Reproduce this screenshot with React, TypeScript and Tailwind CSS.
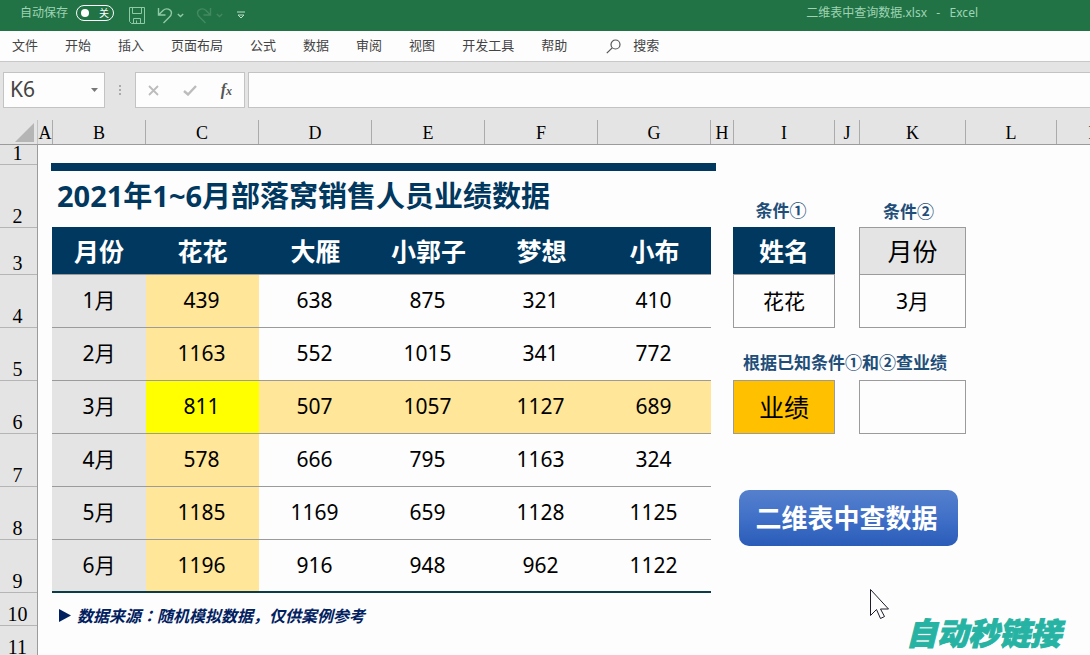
import clsx from 'clsx';

const TABS = ['文件', '开始', '插入', '页面布局', '公式', '数据', '审阅', '视图', '开发工具', '帮助'];

const COLUMNS = [
  { name: 'A', width: 'w-[15px]' },
  { name: 'B', width: 'w-[93px]' },
  { name: 'C', width: 'w-[113px]' },
  { name: 'D', width: 'w-[113px]' },
  { name: 'E', width: 'w-[113px]' },
  { name: 'F', width: 'w-[113px]' },
  { name: 'G', width: 'w-[113px]' },
  { name: 'H', width: 'w-[23px]' },
  { name: 'I', width: 'w-[101px]' },
  { name: 'J', width: 'w-[25px]' },
  { name: 'K', width: 'w-[106px]' },
  { name: 'L', width: 'w-[91px]' },
  { name: 'M', width: 'w-[80px]' },
];

const ROWS = [
  { name: '1', height: 'h-[20px]' },
  { name: '2', height: 'h-[63px]' },
  { name: '3', height: 'h-[47px]' },
  { name: '4', height: 'h-[53px]' },
  { name: '5', height: 'h-[53px]' },
  { name: '6', height: 'h-[53px]' },
  { name: '7', height: 'h-[53px]' },
  { name: '8', height: 'h-[53px]' },
  { name: '9', height: 'h-[53px]' },
  { name: '10', height: 'h-[33px]' },
  { name: '11', height: 'h-[33px]' },
];

const PEOPLE = ['花花', '大雁', '小郭子', '梦想', '小布'];

const SALES = [
  { month: '1月', values: [439, 638, 875, 321, 410] },
  { month: '2月', values: [1163, 552, 1015, 341, 772] },
  { month: '3月', values: [811, 507, 1057, 1127, 689] },
  { month: '4月', values: [578, 666, 795, 1163, 324] },
  { month: '5月', values: [1185, 1169, 659, 1128, 1125] },
  { month: '6月', values: [1196, 916, 948, 962, 1122] },
];

const PICKED_NAME = '花花';
const PICKED_MONTH = '3月';

function TitleBar() {
  return (
    <header className="flex h-[31px] shrink-0 items-start justify-between bg-[#217346] pl-5 pr-28 text-xs text-[#9fd3b3]">
      <div className="flex h-[26px] items-center">
        <span>自动保存</span>
        <button
          role="switch"
          aria-checked="false"
          aria-label="自动保存"
          className="ml-2 flex h-4 w-[38px] items-center justify-between rounded-full border border-white px-1 text-[10px] leading-3 text-white"
        >
          <span className="h-2 w-2 rounded-full bg-white" />
          关
        </button>
        <button aria-label="保存" className="ml-[15px] mt-1">
          <svg width="16" height="17" viewBox="0 0 16 17" fill="none" stroke="#8fcaa6">
            <path d="M.5.5h15v16h-13l-2-2zM3.500.5v6h9v-6M4.500 16.500v-5h7v5M7.500 13.500v3" />
          </svg>
        </button>
        <button aria-label="撤消" className="ml-3 mt-1 flex items-center gap-1">
          <svg width="16" height="17" viewBox="0 0 16 17" fill="none" stroke="#8fcaa6" strokeWidth="1.400">
            <path d="M1.500 1v7h7M1.800 7.800L6 3.500C9 .5 14.500 2 14.500 6c0 2-1 3.200-2.500 4.600L6.500 16" />
          </svg>
          <svg width="7" height="5" viewBox="0 0 7 5" fill="none" stroke="#8fcaa6" strokeWidth="1.400">
            <path d="M.8 1l2.700 2.500L6.200 1" />
          </svg>
        </button>
        <button aria-label="恢复" disabled className="ml-3 mt-1 flex items-center gap-1">
          <svg width="16" height="17" viewBox="0 0 16 17" fill="none" stroke="#43895f" strokeWidth="1.400">
            <path d="M14.500 1v7h-7M14.200 7.800L10 3.500C7 .5 1.500 2 1.500 6c0 2 1 3.200 2.500 4.600L9.500 16" />
          </svg>
          <svg width="7" height="5" viewBox="0 0 7 5" fill="none" stroke="#43895f" strokeWidth="1.400">
            <path d="M.8 1l2.700 2.500L6.200 1" />
          </svg>
        </button>
        <button aria-label="自定义快速访问工具栏" className="ml-3.5 mt-1">
          <svg width="8" height="8" viewBox="0 0 8 8" fill="none" stroke="#b9dfc7">
            <path d="M0 1h8M1 4l3 3 3-3z" />
          </svg>
        </button>
      </div>
      <h1 className="whitespace-pre leading-[26px]">二维表中查询数据.xlsx   -   Excel</h1>
    </header>
  );
}

function MenuBar() {
  return (
    <nav className="flex h-[31px] shrink-0 items-center gap-[27px] border-b border-[#c8c8c8] bg-[#fdfdfd] pl-3 text-[13px] text-[#444444]">
      {TABS.map((tab) => (
        <button key={tab} className="shrink-0">
          {tab}
        </button>
      ))}
      <button className="ml-3 flex items-center gap-3">
        <svg width="15" height="15" viewBox="0 0 15 15" fill="none" stroke="#555555" strokeWidth="1.200">
          <circle cx="9.500" cy="5.500" r="4.500" />
          <path d="M6.200 8.800L.8 14.200" />
        </svg>
        搜索
      </button>
    </nav>
  );
}

function FormulaBar() {
  return (
    <div className="flex h-[46px] shrink-0 items-end bg-[#e4e4e4] pl-[3px]">
      <div className="flex h-9 w-[102px] items-center border border-[#c3c3c3] bg-[#fdfdfd] px-1.5">
        <input aria-label="名称框" defaultValue="K6" className="w-full min-w-0 text-[21px] text-[#444444] outline-none" />
        <button aria-label="打开名称列表">
          <svg width="7" height="4" viewBox="0 0 7 4" fill="#777777">
            <path d="M0 0h7L3.500 4z" />
          </svg>
        </button>
      </div>
      <div className="flex h-9 w-[30px] flex-col items-center justify-center gap-0.5">
        <span className="h-0.5 w-0.5 bg-[#aaaaaa]" />
        <span className="h-0.5 w-0.5 bg-[#aaaaaa]" />
        <span className="h-0.5 w-0.5 bg-[#aaaaaa]" />
      </div>
      <div className="flex h-9 w-[110px] items-center justify-between border border-[#c3c3c3] bg-[#fdfdfd] px-3">
        <button aria-label="取消">
          <svg width="11" height="11" viewBox="0 0 11 11" fill="none" stroke="#bcbcbc" strokeWidth="1.800">
            <path d="M1 1l9 9M10 1l-9 9" />
          </svg>
        </button>
        <button aria-label="输入">
          <svg width="14" height="11" viewBox="0 0 14 11" fill="none" stroke="#bcbcbc" strokeWidth="2.400">
            <path d="M1 6l4 3.500L13 1" />
          </svg>
        </button>
        <button aria-label="插入函数" className="font-['Liberation_Serif',serif] text-base font-bold italic leading-4 text-[#555555]">
          f<span className="text-xs">x</span>
        </button>
      </div>
      <input aria-label="编辑栏" className="ml-[3px] h-9 min-w-0 flex-1 border border-r-0 border-[#c3c3c3] bg-[#fdfdfd] px-2 text-[21px] outline-none" />
    </div>
  );
}

function ColumnHeaders() {
  return (
    <div className="flex h-[37px] shrink-0 items-end overflow-hidden border-b border-[#9b9b9b] bg-[#e4e4e4] font-['Liberation_Serif',serif] text-lg leading-[26px] text-black">
      <div className="flex h-6 w-[38px] shrink-0 items-center justify-end border-r border-[#c3c3c3] pr-[3px]">
        <svg width="19" height="19" viewBox="0 0 19 19" fill="#b5b5b5">
          <path d="M19 0v19H0z" />
        </svg>
      </div>
      {COLUMNS.map(({ name, width }) => (
        <div key={name} className={clsx('h-6 shrink-0 border-r border-[#ababab] text-center', width)}>
          {name}
        </div>
      ))}
    </div>
  );
}

function RowHeaders() {
  return (
    <div className="w-[38px] shrink-0 border-r border-[#9b9b9b] bg-[#e4e4e4] font-['Liberation_Serif',serif] text-xl leading-4 text-black">
      {ROWS.map(({ name, height }) => (
        <div key={name} className={clsx('flex items-end justify-center border-b border-[#b5b5b5] pb-[3px] pr-0.5', height)}>
          {name}
        </div>
      ))}
    </div>
  );
}

function cellColor(month: string, name: string) {
  if (month === PICKED_MONTH && name === PICKED_NAME) return 'bg-[#ffff00]';
  if (month === PICKED_MONTH || name === PICKED_NAME) return 'bg-[#ffe699]';
  return '';
}

function SalesTable() {
  return (
    <section className="w-[665px] shrink-0 pt-[18px]">
      <div className="h-2 bg-[#003860]" />
      <h2 className="h-14 pl-1.5 text-[29px] font-bold leading-[50px] text-[#003860]">2021年1~6月部落窝销售人员业绩数据</h2>
      <table className="ml-px w-[659px] table-fixed border-separate border-spacing-0 text-center text-[21px] text-black">
        <thead>
          <tr className="h-12 bg-[#003860] text-[25px] leading-8 text-white">
            <th className="w-[94px] border-b border-[#9b9b9b]">月份</th>
            {PEOPLE.map((name) => (
              <th key={name} className="border-b border-[#9b9b9b]">
                {name}
              </th>
            ))}
          </tr>
        </thead>
        <tbody>
          {SALES.map(({ month, values }, i) => {
            const border = i === SALES.length - 1 ? 'border-b-2 border-[#0b3c49]' : 'border-b border-[#9b9b9b]';
            return (
              <tr key={month} className="h-[53px] leading-8">
                <th className={clsx('bg-[#e4e4e4] pb-0.5 font-normal', border)}>{month}</th>
                {values.map((value, j) => (
                  <td key={PEOPLE[j]} className={clsx('pb-0.5 pr-0.5', border, cellColor(month, PEOPLE[j]))}>
                    {value}
                  </td>
                ))}
              </tr>
            );
          })}
        </tbody>
      </table>
      <p className="flex items-center gap-1.5 pl-2 pt-2 font-['Noto_Sans_CJK_JP',sans-serif] text-base font-bold leading-7 text-[#002060]">
        <svg width="12" height="13" viewBox="0 0 12 13" fill="currentColor">
          <path d="M0 0l12 6.500L0 13z" />
        </svg>
        <em>数据来源：随机模拟数据，仅供案例参考</em>
      </p>
    </section>
  );
}

function LookupPanel() {
  return (
    <section className="ml-[17px] shrink-0 text-black">
      <div className="grid grid-cols-[102px_107px] gap-x-6 text-center">
        <p className="h-[82px] pr-1.5 pt-14 text-[17px] font-bold leading-5 text-[#1f4e79]">条件①</p>
        <p className="h-[82px] pr-2 pt-[57px] text-[17px] font-bold leading-5 text-[#1f4e79]">条件②</p>
        <div>
          <label htmlFor="name" className="block h-12 border-b border-[#9b9b9b] bg-[#003860] text-[25px] font-bold leading-[48px] text-white">
            姓名
          </label>
          <input id="name" defaultValue={PICKED_NAME} className="h-[53px] w-full border border-t-0 border-[#9b9b9b] pb-0.5 text-center text-[21px] outline-none" />
        </div>
        <div>
          <label htmlFor="month" className="block h-12 border border-[#9b9b9b] bg-[#e4e4e4] text-[25px] leading-[46px]">
            月份
          </label>
          <input id="month" defaultValue={PICKED_MONTH} className="h-[53px] w-full border border-t-0 border-[#9b9b9b] pb-0.5 text-center text-[21px] outline-none" />
        </div>
        <p className="col-span-2 h-[52px] pl-2.5 pt-[25px] text-left text-[17px] font-bold leading-5 text-[#1f4e79]">
          根据已知条件①和②查业绩
        </p>
        <label htmlFor="result" className="h-[54px] border border-[#9b9b9b] bg-[#ffc000] text-[25px] leading-[52px]">
          业绩
        </label>
        <input id="result" className="h-[54px] w-full border border-[#9b9b9b] text-center text-[21px] outline-none" />
      </div>
      <div className="pl-1.5 pr-2 pt-14">
        <button className="h-14 w-full rounded-[10px] bg-linear-to-b from-[#5580cc] via-[#4070c8] to-[#2a5cb8] pr-1 text-[26px] font-bold text-white">
          二维表中查数据
        </button>
      </div>
    </section>
  );
}

export default function App() {
  return (
    <div className="relative flex h-screen flex-col overflow-hidden bg-[#fdfdfd] font-['Noto_Sans','Noto_Sans_CJK_SC',sans-serif]">
      <TitleBar />
      <MenuBar />
      <FormulaBar />
      <ColumnHeaders />
      <main className="flex min-h-0 flex-1 overflow-hidden">
        <RowHeaders />
        <div className="flex min-w-0 flex-1 items-start pl-[13px]">
          <SalesTable />
          <LookupPanel />
        </div>
      </main>
      <svg className="absolute left-[870px] top-[589px]" width="20" height="31" viewBox="0 0 20 31" fill="#fdfdfd" stroke="#1c1c2c">
        <path d="M.5.500v26l6-6 4 9 4-2-4-7.500h8z" />
      </svg>
      <p className="absolute bottom-1 right-[29px] text-[31px] font-black italic leading-9 text-[#26b3a3] [-webkit-text-stroke:1px_#26b3a3]">
        自动秒链接
      </p>
    </div>
  );
}
